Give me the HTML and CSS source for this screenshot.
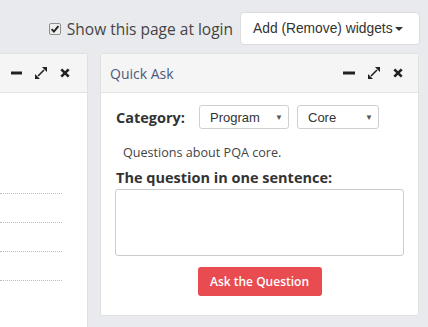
FILE: index.html
```html
<!DOCTYPE html>
<html lang="en">
<head>
  <meta charset="UTF-8" />
  <meta name="viewport" content="width=device-width, initial-scale=1.0"/>
  <title>Dashboard</title>
  <link rel="stylesheet" href="styles.css">
</head>
<body>

  <div class="toolbar">
    <label class="login-toggle">
      <svg class="check" width="12" height="12" viewBox="0 0 12 12">
        <rect x="0.5" y="0.5" width="11" height="11" rx="1.5" fill="#eeeeee" stroke="#8f8f8f"/>
        <path d="M2.6 6.2 L4.9 8.6 L9.4 3.2" fill="none" stroke="#222" stroke-width="1.9"/>
      </svg>
      Show this page at login
    </label>
    <button type="button" class="widgets-btn">Add (Remove) widgets <span class="caret"></span></button>
  </div>

  <div class="board">
    <!-- widget cut off on the left -->
    <section class="panel panel-cut">
      <header class="panel-head">
        <span class="panel-title"></span>
        <div class="panel-tools">
          <svg width="11" height="12" viewBox="0 0 11 12"><rect x="0" y="4.5" width="11" height="3" fill="#222"/></svg>
          <svg width="12" height="12" viewBox="0 0 12 12"><path d="M7 0 H12 V5 Z M0 7 V12 H5 Z" fill="#222"/><path d="M9 3 L3 9" stroke="#222" stroke-width="1.6"/></svg>
          <svg width="10" height="10" viewBox="0 0 10 10"><path d="M1.3 1.3 L8.7 8.7 M8.7 1.3 L1.3 8.7" stroke="#222" stroke-width="2.6"/></svg>
        </div>
      </header>
      <ul class="link-list">
        <li></li>
        <li></li>
        <li></li>
        <li></li>
      </ul>
    </section>

    <section class="panel quick-ask">
      <header class="panel-head">
        <span class="panel-title">Quick Ask</span>
        <div class="panel-tools">
          <svg width="12" height="12" viewBox="0 0 12 12"><rect x="0" y="4.5" width="12" height="3" fill="#222"/></svg>
          <svg width="12" height="12" viewBox="0 0 12 12"><path d="M7 0 H12 V5 Z M0 7 V12 H5 Z" fill="#222"/><path d="M9 3 L3 9" stroke="#222" stroke-width="1.6"/></svg>
          <svg width="10" height="10" viewBox="0 0 10 10"><path d="M1.3 1.3 L8.7 8.7 M8.7 1.3 L1.3 8.7" stroke="#222" stroke-width="2.6"/></svg>
        </div>
      </header>
      <div class="panel-body">
        <div class="category-row">
          <span class="field-label">Category:</span>
          <div class="fake-select select-program"><span>Program</span><span class="arrow">▼</span></div>
          <div class="fake-select select-core"><span>Core</span><span class="arrow">▼</span></div>
        </div>
        <p class="category-note">Questions about PQA core.</p>
        <div class="field-label question-label">The question in one sentence:</div>
        <textarea class="question-box"></textarea>
        <button type="button" class="ask-btn">Ask the Question</button>
      </div>
    </section>
  </div>

</body>
</html>
```

FILE: styles.css
```css
body {
  margin: 0;
  height: 327px;
  overflow: hidden;
  background: #e9eaed;
  font-family: 'Open Sans', sans-serif;
  color: #333;
}

.toolbar {
  display: flex;
  justify-content: flex-end;
  align-items: center;
  gap: 7px;
  height: 33px;
  padding: 12px 8px 0 0;
}

.login-toggle {
  display: flex;
  align-items: center;
  gap: 6px;
  font-size: 15.5px;
  color: #444;
}

.widgets-btn {
  height: 33px;
  width: 180px;
  padding: 0 0 0 12px;
  text-align: left;
  background: #fff;
  border: 1px solid #dcdcdc;
  border-radius: 4px;
  font-family: 'Liberation Sans', Arial, sans-serif;
  font-size: 13.8px;
  color: #333;
}

.caret {
  display: inline-block;
  width: 0;
  height: 0;
  margin-left: -1px;
  vertical-align: middle;
  border-top: 4px solid #333;
  border-left: 4px solid transparent;
  border-right: 4px solid transparent;
}

.board {
  display: flex;
  align-items: flex-start;
  gap: 12px;
  margin-top: 8px;
}

.panel {
  background: #fff;
  border: 1px solid #e0e0e0;
  border-radius: 3px;
  box-sizing: border-box;
}

.panel-cut {
  width: 88px;
  min-height: 290px;
  border-left: none;
  border-radius: 0 3px 0 0;
}

.quick-ask {
  width: 319px;
}

.panel-head {
  display: flex;
  align-items: center;
  justify-content: space-between;
  height: 38px;
  padding: 0 15px 0 9px;
  background: #f5f5f5;
  border-bottom: 1px solid #e3e3e3;
}

.panel-cut .panel-head {
  padding-right: 17px;
}

.panel-title {
  font-size: 14px;
  color: #4b5a7a;
}

.panel-tools {
  display: flex;
  align-items: center;
  gap: 13px;
}

.link-list {
  list-style: none;
  margin: 0;
  padding: 72px 25px 0 0;
}

.link-list li {
  height: 28px;
  border-bottom: 1px dotted #bdbdbd;
}

.panel-body {
  padding: 12px 15px 19px 15px;
}

.category-row {
  display: flex;
  align-items: center;
  height: 24px;
}

.field-label {
  font-size: 14.5px;
  font-weight: bold;
  color: #333;
}

.category-row .field-label {
  width: 83px;
}

.fake-select {
  display: flex;
  align-items: center;
  justify-content: space-between;
  box-sizing: border-box;
  height: 24px;
  padding: 0 5px 0 10px;
  border: 1px solid #cfcfcf;
  border-radius: 3px;
  font-family: 'Liberation Sans', Arial, sans-serif;
  font-size: 13px;
  color: #333;
}

.select-program {
  width: 90px;
  margin-right: 8px;
}

.select-core {
  width: 82px;
}

.arrow {
  font-size: 8px;
  color: #555;
}

.category-note {
  margin: 15px 0 0 7px;
  font-size: 12.6px;
  line-height: 17px;
  color: #444;
}

.question-label {
  margin-top: 8px;
  line-height: 18px;
}

.question-box {
  display: block;
  box-sizing: border-box;
  width: 289px;
  height: 67px;
  margin: 2px 0 0 -1px;
  border: 1px solid #cccccc;
  border-radius: 3px;
  resize: none;
}

.ask-btn {
  display: block;
  width: 124px;
  height: 29px;
  margin: 11px auto 0;
  background: #e84c51;
  color: #fff;
  border: none;
  border-radius: 3px;
  font-family: 'Open Sans', sans-serif;
  font-size: 12px;
  font-weight: 600;
}
```
